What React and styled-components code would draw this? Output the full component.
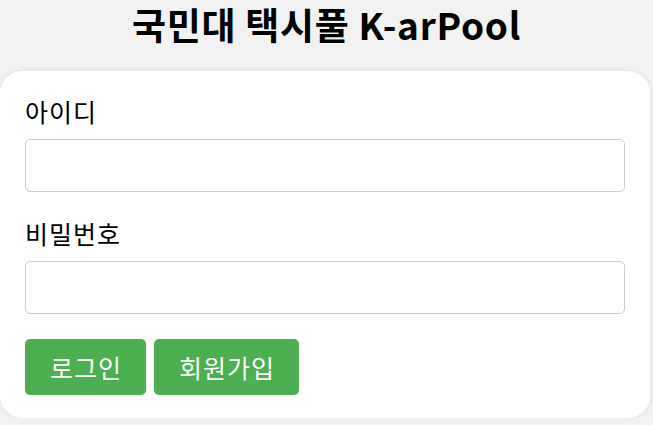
import React from "react";
import styled, { createGlobalStyle } from "styled-components";

const GlobalStyle = createGlobalStyle`
  * { box-sizing: border-box; }
  body {
    margin: 0;
    background: #f2f2f2;
    font-family: "Noto Sans CJK KR", "Noto Sans", sans-serif;
  }
`;

function App() {
  return (
    <>
      <GlobalStyle />
      <Spage>
        <Stitle>국민대 택시풀 K-arPool</Stitle>
        <Scard>
          <Slabel>아이디</Slabel>
          <Sinput type="text" />
          <Slabel>비밀번호</Slabel>
          <Sinput type="password" $last />
          <Sbuttons>
            <Sbutton>로그인</Sbutton>
            <Sbutton>회원가입</Sbutton>
          </Sbuttons>
        </Scard>
      </Spage>
    </>
  );
}

const Spage = styled.div`
  width: 100%;
`;

const Stitle = styled.h1`
  margin: 0;
  height: 71px;
  text-align: center;
  font-size: 37px;
  font-weight: 700;
  line-height: 48px;
  letter-spacing: 0.7px;
  color: #000;
`;

const Scard = styled.div`
  width: 650px;
  background: #fff;
  border-radius: 22px;
  padding: 25px 25px 23px;
  box-shadow: 0 0 6px rgba(0, 0, 0, 0.08);
`;

const Slabel = styled.label`
  display: block;
  font-size: 25px;
  line-height: 30px;
  letter-spacing: 1px;
  margin-bottom: 13px;
  color: #000;
`;

const Sinput = styled.input`
  display: block;
  width: 100%;
  height: 53px;
  border: 1px solid #ccc;
  border-radius: 5px;
  margin: 0 0 ${(p) => (p.$last ? "25px" : "26px")};
  font-size: 18px;
  padding: 0 10px;
`;

const Sbuttons = styled.div`
  display: flex;
  gap: 8px;
`;

const Sbutton = styled.button`
  height: 56px;
  padding: 0 24px 0 25px;
  border: none;
  border-radius: 5px;
  background: #4caf50;
  color: #fff;
  font-family: "Noto Sans CJK KR", "Noto Sans", sans-serif;
  font-size: 25px;
  letter-spacing: 1px;
  cursor: pointer;
`;

export default App;
